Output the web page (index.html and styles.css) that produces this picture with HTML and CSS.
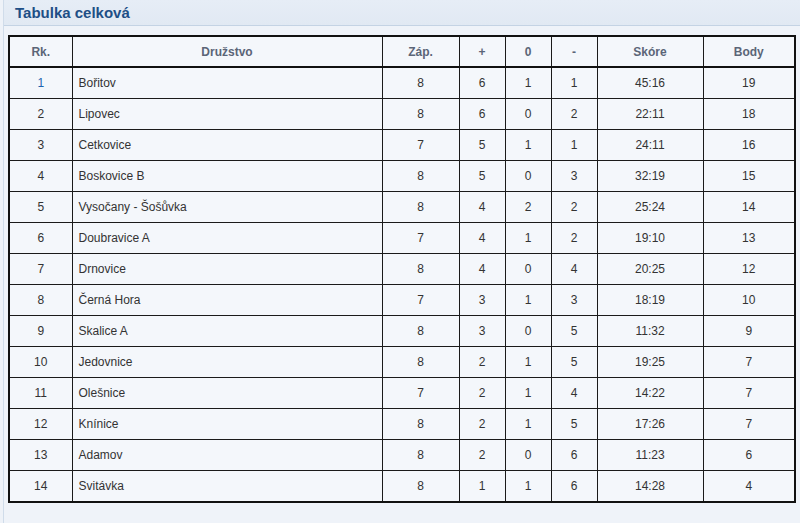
FILE: index.html
```html
<!DOCTYPE html>
<html lang="cs">
<head>
<meta charset="utf-8">
<title>Tabulka celková</title>
<link rel="stylesheet" href="styles.css">
</head>
<body>
<div class="panel">
  <div class="panel-head"><h2 class="panel-title">Tabulka celková</h2></div>
  <div class="panel-body">
    <table class="standings">
      <colgroup>
        <col class="c-rk"><col class="c-team"><col class="c-zap"><col class="c-n"><col class="c-n"><col class="c-n"><col class="c-score"><col class="c-pts">
      </colgroup>
      <thead>
        <tr><th>Rk.</th><th>Družstvo</th><th>Záp.</th><th>+</th><th>0</th><th>-</th><th>Skóre</th><th>Body</th></tr>
      </thead>
      <tbody>
        <tr><td class="rk first">1</td><td class="team">Bořitov</td><td>8</td><td>6</td><td>1</td><td>1</td><td>45:16</td><td>19</td></tr>
        <tr><td class="rk">2</td><td class="team">Lipovec</td><td>8</td><td>6</td><td>0</td><td>2</td><td>22:11</td><td>18</td></tr>
        <tr><td class="rk">3</td><td class="team">Cetkovice</td><td>7</td><td>5</td><td>1</td><td>1</td><td>24:11</td><td>16</td></tr>
        <tr><td class="rk">4</td><td class="team">Boskovice B</td><td>8</td><td>5</td><td>0</td><td>3</td><td>32:19</td><td>15</td></tr>
        <tr><td class="rk">5</td><td class="team">Vysočany - Šošůvka</td><td>8</td><td>4</td><td>2</td><td>2</td><td>25:24</td><td>14</td></tr>
        <tr><td class="rk">6</td><td class="team">Doubravice A</td><td>7</td><td>4</td><td>1</td><td>2</td><td>19:10</td><td>13</td></tr>
        <tr><td class="rk">7</td><td class="team">Drnovice</td><td>8</td><td>4</td><td>0</td><td>4</td><td>20:25</td><td>12</td></tr>
        <tr><td class="rk">8</td><td class="team">Černá Hora</td><td>7</td><td>3</td><td>1</td><td>3</td><td>18:19</td><td>10</td></tr>
        <tr><td class="rk">9</td><td class="team">Skalice A</td><td>8</td><td>3</td><td>0</td><td>5</td><td>11:32</td><td>9</td></tr>
        <tr><td class="rk">10</td><td class="team">Jedovnice</td><td>8</td><td>2</td><td>1</td><td>5</td><td>19:25</td><td>7</td></tr>
        <tr><td class="rk">11</td><td class="team">Olešnice</td><td>7</td><td>2</td><td>1</td><td>4</td><td>14:22</td><td>7</td></tr>
        <tr><td class="rk">12</td><td class="team">Knínice</td><td>8</td><td>2</td><td>1</td><td>5</td><td>17:26</td><td>7</td></tr>
        <tr><td class="rk">13</td><td class="team">Adamov</td><td>8</td><td>2</td><td>0</td><td>6</td><td>11:23</td><td>6</td></tr>
        <tr><td class="rk">14</td><td class="team">Svitávka</td><td>8</td><td>1</td><td>1</td><td>6</td><td>14:28</td><td>4</td></tr>
      </tbody>
    </table>
  </div>
</div>
</body>
</html>
```

FILE: styles.css
```css
html, body {
  margin: 0;
  padding: 0;
  background: #eef2f8;
  font-family: "Liberation Sans", Arial, sans-serif;
  font-size: 12px;
  color: #333;
}
.panel {
  margin-left: 3px;
  border-left: 1px solid #d0dcea;
  min-height: 523px;
  background: #eff3f9;
}
.panel-head {
  height: 26px;
  background: linear-gradient(#e6edf6, #e1e9f3);
  border-bottom: 1px solid #c4d3e4;
  box-sizing: border-box;
  padding-left: 11px;
  display: flex;
  align-items: center;
}
.panel-title {
  margin: 0;
  font-size: 15px;
  font-weight: bold;
  color: #1e4f86;
}
.panel-body {
  padding: 9px 0 0 4px;
}
.standings {
  border-collapse: collapse;
  width: 786px;
  table-layout: fixed;
  background: #f4f7fb;
  border: 2px solid #111;
}
.c-rk { width: 63px; }
.c-team { width: 310px; }
.c-zap { width: 77px; }
.c-n { width: 46px; }
.c-score { width: 106px; }
.c-pts { width: 92px; }
.standings th,
.standings td {
  border: 1px solid #1a1a1a;
  height: 30px;
  padding: 0;
  text-align: center;
  vertical-align: middle;
}
.standings th {
  height: 29px;
  font-weight: bold;
  color: #5b6577;
  font-size: 12px;
  border-bottom: 2px solid #111;
}
.standings td.team {
  text-align: left;
  padding-left: 6px;
}
.standings td.first { color: #1f64b0; }
```
